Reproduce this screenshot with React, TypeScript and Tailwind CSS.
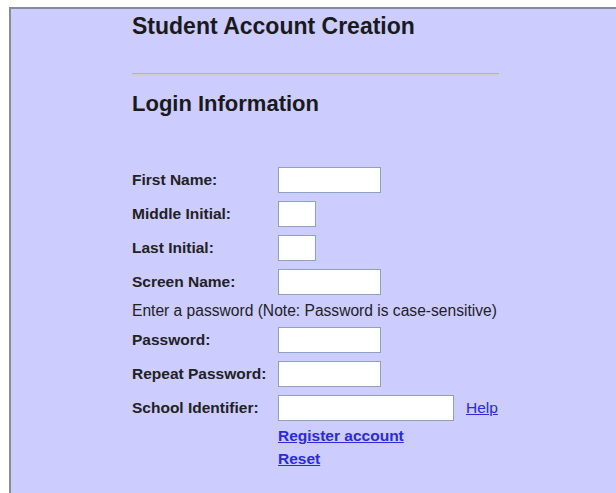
import React from 'react';

// Label column is fixed so every input lines up at the same x
const Field = ({ label, width }: { label: string; width: string }) => (
  <div className="flex items-center h-[26px]">
    <label className="w-[146px] shrink-0 font-bold text-[15.5px] text-[#222]">{label}</label>
    <input type="text" className={`${width} h-[26px] bg-white border border-[#8ea2c0] outline-none`} />
  </div>
);

const App = () => {
  return (
    <div className="min-h-[493px] bg-white pt-[7px] pl-[9px]" style={{ fontFamily: '"Liberation Sans", Arial, sans-serif' }}>
      <div className="min-h-[486px] bg-[#ccccff] border-t-2 border-l-2 border-[#8a8a9c] pl-[121px] pt-[3px]">
        <h1 className="text-[23px] font-bold text-[#1a1a1a] leading-[28px]">Student Account Creation</h1>

        <div className="w-[367px] h-[3px] mt-[33px] bg-[#d2cec8] border-t border-[#b0b0c0]" />

        <h2 className="text-[22px] font-bold text-[#1a1a1a] leading-[28px] mt-[14px]">Login Information</h2>

        <form className="flex flex-col gap-[8px] mt-[49px]">
          <Field label="First Name:" width="w-[103px]" />
          <Field label="Middle Initial:" width="w-[38px]" />
          <Field label="Last Initial:" width="w-[38px]" />
          <Field label="Screen Name:" width="w-[103px]" />
          <p className="text-[15.6px] leading-[16px] text-[#222]">
            Enter a password (Note: Password is case-sensitive)
          </p>
          <Field label="Password:" width="w-[103px]" />
          <Field label="Repeat Password:" width="w-[103px]" />
          <div className="flex items-center h-[26px]">
            <label className="w-[146px] shrink-0 font-bold text-[15.5px] text-[#222]">School Identifier:</label>
            <input type="text" className="w-[176px] h-[26px] bg-white border border-[#8ea2c0] outline-none" />
            <a href="#" className="ml-[12px] text-[15.5px] text-[#2a2ae0] underline">Help</a>
          </div>
          <div className="flex flex-col pl-[146px] leading-[23px] -mt-[5px]">
            <a href="#" className="text-[15.5px] font-bold text-[#2a2ae0] underline w-fit">Register account</a>
            <a href="#" className="text-[15.5px] font-bold text-[#2a2ae0] underline w-fit">Reset</a>
          </div>
        </form>
      </div>
    </div>
  );
};

export default App;
